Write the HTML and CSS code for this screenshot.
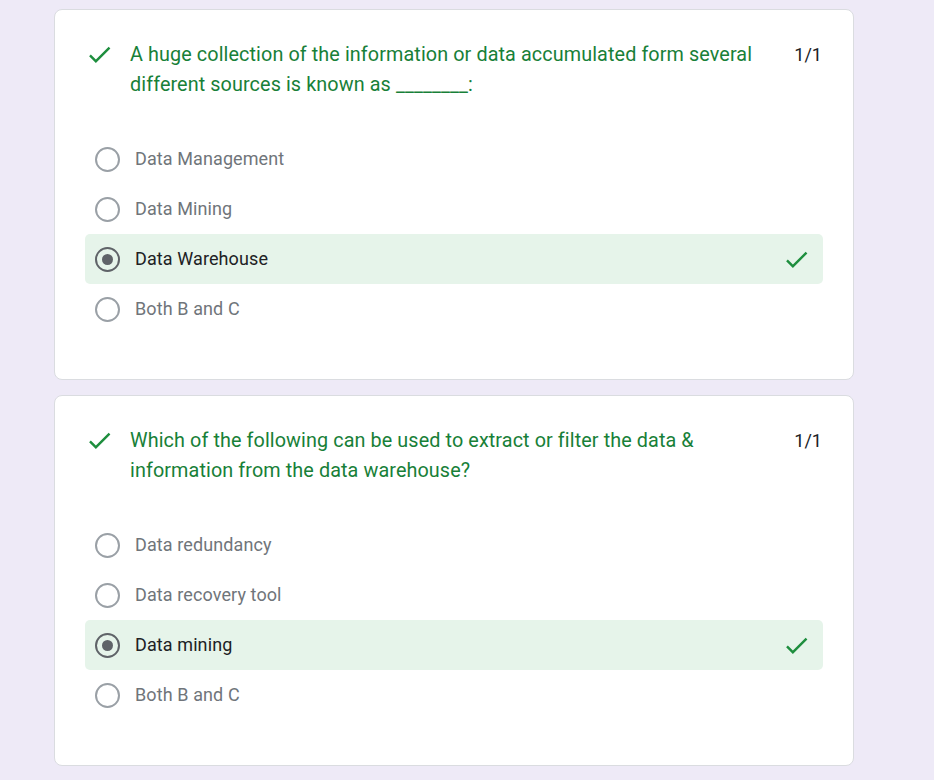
FILE: index.html
```html
<!DOCTYPE html>
<html lang="en">
<head>
<meta charset="utf-8">
<title>Quiz results</title>
<link rel="stylesheet" href="styles.css">
</head>
<body>
<main class="page">
  <section class="card">
    <div class="q-head">
      <svg class="q-check" viewBox="0 0 24 24"><path d="M9 16.17L4.83 12l-1.42 1.41L9 19 21 7l-1.41-1.41z"/></svg>
      <div class="q-title">A huge collection of the information or data accumulated form several different sources is known as ________:</div>
      <div class="q-points">1/1</div>
    </div>
    <div class="options">
      <div class="opt"><span class="radio"></span><span class="opt-label">Data Management</span></div>
      <div class="opt"><span class="radio"></span><span class="opt-label">Data Mining</span></div>
      <div class="opt opt-correct"><span class="radio radio-on"></span><span class="opt-label">Data Warehouse</span>
        <svg class="opt-check" viewBox="0 0 24 24"><path d="M9 16.17L4.83 12l-1.42 1.41L9 19 21 7l-1.41-1.41z"/></svg></div>
      <div class="opt"><span class="radio"></span><span class="opt-label">Both B and C</span></div>
    </div>
  </section>
  <section class="card">
    <div class="q-head">
      <svg class="q-check" viewBox="0 0 24 24"><path d="M9 16.17L4.83 12l-1.42 1.41L9 19 21 7l-1.41-1.41z"/></svg>
      <div class="q-title">Which of the following can be used to extract or filter the data &amp; information from the data warehouse?</div>
      <div class="q-points">1/1</div>
    </div>
    <div class="options">
      <div class="opt"><span class="radio"></span><span class="opt-label">Data redundancy</span></div>
      <div class="opt"><span class="radio"></span><span class="opt-label">Data recovery tool</span></div>
      <div class="opt opt-correct"><span class="radio radio-on"></span><span class="opt-label">Data mining</span>
        <svg class="opt-check" viewBox="0 0 24 24"><path d="M9 16.17L4.83 12l-1.42 1.41L9 19 21 7l-1.41-1.41z"/></svg></div>
      <div class="opt"><span class="radio"></span><span class="opt-label">Both B and C</span></div>
    </div>
  </section>
</main>
</body>
</html>
```
FILE: styles.css
```css
html, body {
  margin: 0;
  padding: 0;
  background: #eeeaf7;
}
body {
  font-family: Roboto, "Liberation Sans", Arial, sans-serif;
}
.page {
  padding: 9px 0 20px 54px;
  display: flex;
  flex-direction: column;
  gap: 15px;
}
.card {
  box-sizing: border-box;
  width: 800px;
  background: #fff;
  border: 1px solid #dadce0;
  border-radius: 8px;
  padding: 30px 30px 45px 30px;
}
.q-head {
  display: flex;
  align-items: flex-start;
}
.q-check {
  width: 29px;
  height: 29px;
  flex: none;
  fill: #1e8e3e;
}
.q-title {
  flex: 1;
  margin-left: 16px;
  padding-right: 30px;
  font-size: 19.8px;
  line-height: 30px;
  color: #188038;
  letter-spacing: 0.1px;
}
.q-points {
  flex: none;
  font-size: 18px;
  line-height: 30px;
  color: #202124;
  padding-right: 1px;
}
.options {
  margin-top: 34px;
  display: flex;
  flex-direction: column;
}
.opt {
  display: flex;
  align-items: center;
  height: 50px;
  padding: 0 12px 0 10px;
  border-radius: 5px;
}
.radio {
  box-sizing: border-box;
  width: 25px;
  height: 25px;
  border: 2px solid #9aa0a6;
  border-radius: 50%;
  flex: none;
  display: flex;
  align-items: center;
  justify-content: center;
}
.radio-on {
  border-color: #5f6368;
}
.radio-on::after {
  content: "";
  width: 11px;
  height: 11px;
  border-radius: 50%;
  background: #5f6368;
}
.opt-label {
  margin-left: 15px;
  padding-bottom: 2px;
  font-size: 18px;
  color: #70757a;
  letter-spacing: 0.1px;
  flex: 1;
}
.opt-correct {
  background: #e6f4ea;
}
.opt-correct .opt-label {
  color: #202124;
}
.opt-check {
  width: 29px;
  height: 29px;
  fill: #1e8e3e;
  flex: none;
}
```
